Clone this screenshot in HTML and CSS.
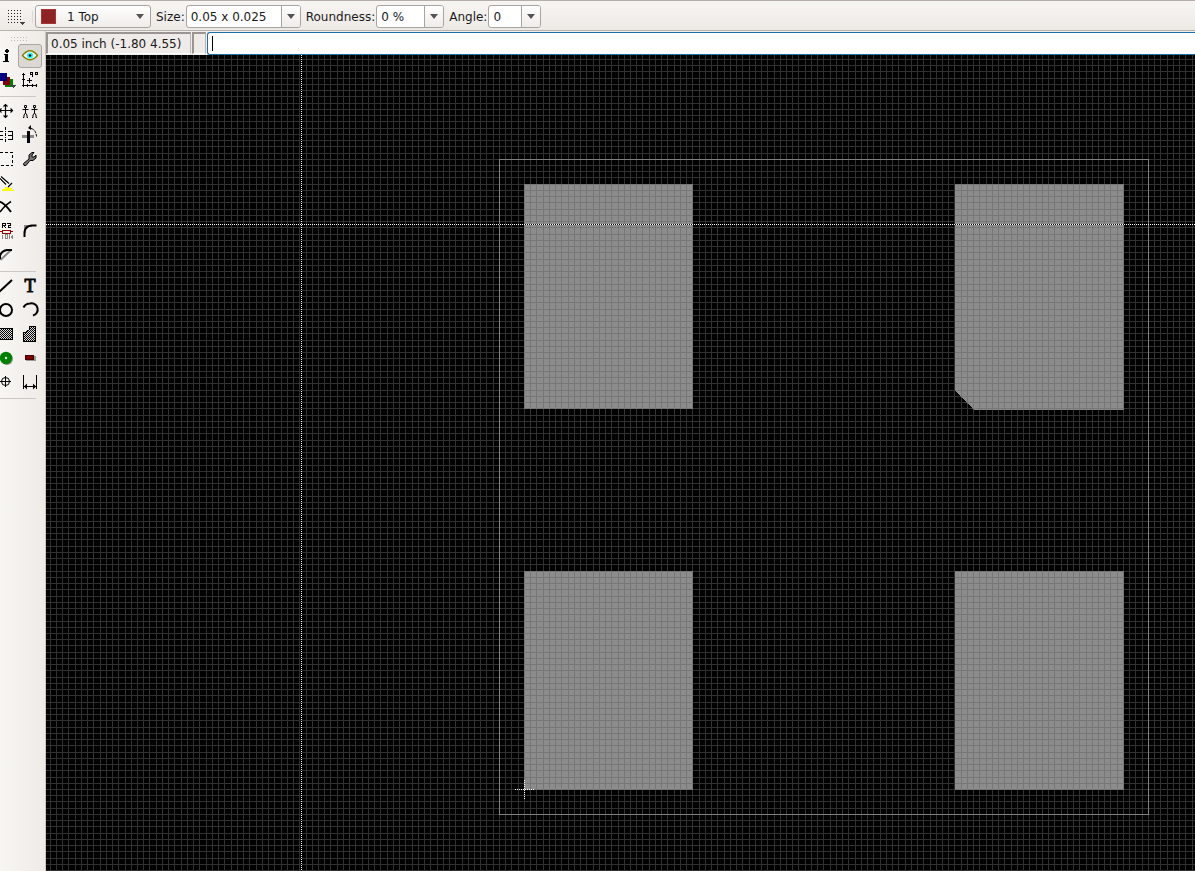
FILE: index.html
```html
<!DOCTYPE html>
<html lang="en">
<head>
<meta charset="utf-8">
<title>Footprint editor</title>
<link rel="stylesheet" href="styles.css">
</head>
<body>
<header class="options">
  <button class="grid-btn" aria-label="Grid"><svg width="20" height="20" shape-rendering="crispEdges"><path d="M1 1.5H15M1 4.5H15M1 7.5H15M1 10.5H15M1 13.5H12" stroke="#222" stroke-dasharray="1 2"/><path d="M12 13h6l-3 3z" fill="#444"/></svg></button>
  <span class="sep"></span>
  <button class="combo layer"><span class="swatch"></span><span class="value">1 Top</span><span class="arrow"></span></button>
  <label for="size">Size:</label>
  <div class="combo size"><input id="size" value="0.05 x 0.025"><button class="drop" aria-label="Size list"><span class="arrow"></span></button></div>
  <label for="round">Roundness:</label>
  <div class="combo round"><input id="round" value="0 %"><button class="drop" aria-label="Roundness list"><span class="arrow"></span></button></div>
  <label for="angle">Angle:</label>
  <div class="combo angle"><input id="angle" value="0"><button class="drop" aria-label="Angle list"><span class="arrow"></span></button></div>
</header>
<div class="work">
  <nav class="tools">
    <div class="handle"></div>
    <div class="group first">
      <button aria-label="Info"><svg viewBox="0 0 24 24" shape-rendering="crispEdges"><path d="M11 6h1V5h2v1h1v2h-1v1h-2V8h-1zM10 10h4v7h1v1h-6v-1h2v-6h-1z" fill="#000"/></svg></button>
      <button class="on" aria-label="Show"><svg viewBox="0 0 24 24"><path d="M4.500 11.500Q12 2 19.500 11.500Q12 20 4.500 11.500z" fill="#fff" stroke="#808000" stroke-width="1.300"/><circle cx="12" cy="11.500" r="3" fill="#0ff"/><circle cx="12" cy="11.500" r="1.300"/></svg></button>
      <button aria-label="Layers"><svg viewBox="0 0 24 24" shape-rendering="crispEdges"><path d="M14 11h5v8h-8v-4z" fill="#008000"/><path d="M9 9h7v8H9z" fill="#800000"/><path d="M5 5h8v8H5z" fill="#000080"/><path d="M16 17h6l-3 3z" fill="#444"/></svg></button>
      <button aria-label="Mark"><svg viewBox="0 0 24 24" fill="none" stroke="#000" shape-rendering="crispEdges"><path d="M5.500 5v14M4 17.500h15M4 6.500h3M4 11.500h3M9.500 16v3M14.500 16v3M18.500 16v3M9 12.500h5M11.500 10v5M12 4.500h2v2h-2zM14.500 4v5M17.500 4.500h2v2h-2z"/></svg></button>
    </div>
    <div class="group edit">
      <button aria-label="Move"><svg viewBox="0 0 24 24" fill="none" stroke="#000" stroke-width="1.200"><path d="M11.500 5v14M5 11.500h14M9.500 7.500l2-2 2 2M9.500 16.500l2 2 2-2M7.500 9.500l-2 2 2 2M16.500 9.500l2 2-2 2"/></svg></button>
      <button aria-label="Copy"><svg viewBox="0 0 24 24" fill="none" stroke="#000"><path d="M6.500 6.500h2v2h-2zM15.500 6.500h2v2h-2zM7.500 9v5M4.500 10.500h6M5 18.500h1V16l1.500-2L9 16v2.500h1M16.500 9v5M13.500 10.500h6M14 18.500h1V16l1.500-2 1.500 2v2.500h1"/></svg></button>
      <button aria-label="Mirror"><svg viewBox="0 0 24 24" fill="none" stroke="#000" shape-rendering="crispEdges"><path d="M9 8.500H4M9 12.500H6M9 16.500H4M14 8.500h4v8h-4M14 12.500h4"/><path d="M11.500 4v16" stroke-dasharray="3 1 1 1"/></svg></button>
      <button aria-label="Rotate"><svg viewBox="0 0 24 24"><path d="M4 12h12v3H4z" fill="#888"/><path d="M9 8h3v12H9z"/><path d="M13 5.500q5 1 5.500 8" fill="none" stroke="#000" stroke-dasharray="3 1"/><path d="M10 5l3-3v5z"/></svg></button>
      <button aria-label="Group"><svg viewBox="0 0 24 24" shape-rendering="crispEdges"><path d="M5.500 5.500h13v13h-13z" fill="none" stroke="#000" stroke-dasharray="3 2"/></svg></button>
      <button aria-label="Change"><svg viewBox="0 0 24 24"><path d="M5.500 16.500L11 12V8l3-2.500h2L14 8v2h2l2-2v3l-3 2.500h-3L8 18.500H6z" fill="#777" stroke="#000"/></svg></button>
      <button aria-label="Paste"><svg viewBox="0 0 24 24"><path d="M11 16h4v1h3v2h2v1H8v-2h3z" fill="#ff0" shape-rendering="crispEdges"/><path d="M6 5l8 7 2 2-2 2-3-4-5-5z" fill="#fff"/><path d="M7 5.500l8 7M6 7.500l6 6M18 12l-4 4" fill="none" stroke="#000" stroke-width="1.200"/></svg></button><span></span>
      <button aria-label="Delete"><svg viewBox="0 0 24 24" fill="none" stroke="#000"><path d="M5 6.500q5 1 12 10.500" stroke-width="2"/><path d="M17 6.500Q11 10 6 17" stroke-width="1.500"/></svg></button><span></span>
      <button aria-label="Value"><svg viewBox="0 0 24 24" fill="none" shape-rendering="crispEdges"><path d="M8.500 9V4.500h3v2h-3M10.500 7v1M11.500 8v1M13 4.500h3v2h-2v2h3" stroke="#000"/><path d="M4 12.500h4v-1h8v1h3M8 12v2h8v-2" stroke="#900"/><path d="M8.500 16v4M11.500 15.500h2v4h-2zM15.500 15v5M18.500 16v1h-1v1h1v2" stroke="#888"/></svg></button>
      <button aria-label="Miter"><svg viewBox="0 0 24 24" fill="none"><path d="M7 14V7h7" stroke="#888" stroke-width="2"/><path d="M6.500 18v-5q1-6 7-6.500h5" stroke="#000" stroke-width="2"/></svg></button>
      <button aria-label="Split"><svg viewBox="0 0 24 24" fill="none"><path d="M6.500 17L17 7" stroke="#888" stroke-width="2"/><path d="M6 16v-3q1-5 7-6h5" stroke="#000" stroke-width="2"/></svg></button><span></span>
    </div>
    <div class="group draw">
      <button aria-label="Wire"><svg viewBox="0 0 24 24"><path d="M5 18L18 6" stroke="#000" stroke-width="2"/></svg></button>
      <button class="text-tool" aria-label="Text">T</button>
      <button aria-label="Circle"><svg viewBox="0 0 24 24"><circle cx="12" cy="12" r="6" fill="none" stroke="#000" stroke-width="2"/></svg></button>
      <button aria-label="Arc"><svg viewBox="0 0 24 24"><path d="M5.500 9.500q2-4 6.500-4a6 6 0 0 1 3 12" fill="none" stroke="#000" stroke-width="2"/></svg></button>
      <button aria-label="Rectangle"><svg viewBox="0 0 24 24" shape-rendering="crispEdges"><defs><pattern id="chk" width="2" height="2" patternUnits="userSpaceOnUse"><path d="M0 0h2v2H0z" fill="#ddd"/><path d="M0 0h1v1H0zM1 1h1v1H1z"/></pattern></defs><path d="M5.500 6.500h13v11h-13z" fill="url(#chk)" stroke="#000"/></svg></button>
      <button aria-label="Polygon"><svg viewBox="0 0 24 24" shape-rendering="crispEdges"><path d="M5.500 19.500v-9h2l4-3v-3h6v15z" fill="url(#chk)" stroke="#000"/></svg></button>
      <button aria-label="Pad"><svg viewBox="0 0 24 24"><circle cx="13" cy="13" r="6" fill="#999"/><circle cx="12" cy="12" r="6.200" fill="#008000"/><circle cx="12" cy="12" r="1.200" fill="#eee"/></svg></button>
      <button aria-label="SMD"><svg viewBox="0 0 24 24" shape-rendering="crispEdges"><path d="M8 10h10v5H8z" fill="#999"/><path d="M7.500 9.500h8v4h-8z" fill="#800000" stroke="#400"/></svg></button>
      <button aria-label="Hole"><svg viewBox="0 0 24 24" fill="none" stroke="#000"><circle cx="11.500" cy="11.500" r="4"/><path d="M11.500 6v11M6 11.500h11"/></svg></button>
      <button aria-label="Dimension"><svg viewBox="0 0 24 24"><path d="M5.500 5v14M18.500 5v14M6 16.500h12" fill="none" stroke="#000" shape-rendering="crispEdges"/><path d="M6 16.500l3-3v6zM18 16.500l-3-3v6z"/></svg></button>
    </div>
  </nav>
  <main class="editor">
    <div class="command">
      <output class="coords">0.05 inch (-1.80 4.55)</output><span class="cell"></span>
      <div class="entry"><span class="caret"></span><input aria-label="Command"></div>
    </div>
    <svg class="board" shape-rendering="crispEdges">
      <clipPath id="pads"><path d="M478 129h169v225H478zM909 129h169v226H928L909 336zM478 516h169v219H478zM909 516h169v219H909z"/></clipPath>
      <path d="M478 129h169v225H478zM909 129h169v226H928L909 336zM478 516h169v219H478zM909 516h169v219H909z" fill="#8c8c8c"/>
      <path id="grid" fill="none" stroke="#808080" stroke-opacity=".38"/>
      <path id="padgrid" fill="none" stroke="#777" clip-path="url(#pads)"/>
      <path d="M453.500 104.500h649v655h-649z" fill="none" stroke="#808080"/>
      <path d="M0 169.500H4000M255.500 0V4000" stroke="#000"/>
      <path class="dots" d="M0 169.500H4000M255.500 0V4000M469 734.500h20M478.500 725v20"/>
    </svg>
  </main>
</div>
<script src="grid.js"></script>
</body>
</html>
```
FILE: styles.css
```css
* { box-sizing: border-box; }
body { margin: 0; height: 100vh; display: flex; flex-direction: column; overflow: hidden; background: #f2efec; color: #1a1a1a; font: 12px/16px "DejaVu Sans", sans-serif; }
button { padding: 0; border: 0; background: none; font: inherit; color: inherit; }
input { min-width: 0; border: 0; outline: 0; background: none; font: inherit; color: inherit; }
svg { display: block; }
.options { flex: none; display: flex; align-items: center; height: 31px; padding: 2px 0 0 7px; border-top: 1px solid #b5aeaa; border-bottom: 1px solid #b9b3b0; background: linear-gradient(#f7f5f2, #edeae6); }
.grid-btn { width: 20px; height: 20px; margin-top: 4px; }
.sep { width: 1px; height: 12px; margin: 0 3px 0 5px; background: #ddd8d4; }
.combo { display: flex; align-items: center; height: 23px; border: 1px solid #aaa4a0; border-radius: 3px; background: #fff; }
.options label { margin: 0 1px 0 5px; }
.layer { width: 116px; margin-left: -1px; padding: 0 6px 0 5px; background: linear-gradient(#fff, #efece9); }
.swatch { width: 15px; height: 15px; background: #8e2323; border: 1px solid #a33; }
.value { flex: 1; margin-left: 11px; text-align: left; }
.arrow { width: 0; height: 0; border: 4px solid transparent; border-top: 5px solid #555; border-bottom: 0; }
.combo input { flex: 1; height: 100%; padding: 0 4px; }
.drop { width: 19px; height: 100%; display: flex; align-items: center; justify-content: center; border-left: 1px solid #aaa4a0; border-radius: 0 2px 2px 0; background: linear-gradient(#fff, #efece9); }
.size { width: 115px; }
.round { width: 68px; }
.angle { width: 53px; }
.work { flex: 1; min-height: 0; display: flex; }
.tools { flex: none; width: 46px; overflow: hidden; border-right: 1px solid #c9c4c1; background: linear-gradient(90deg, #f8f6f3, #eeebe7); }
.handle { width: 18px; height: 5px; margin: 5px 0 3px 10px; background: radial-gradient(circle, #c0bbb7 1px, transparent 1px) 0 0 / 3px 3px; }
.group { display: grid; grid-template-columns: 24px 24px; grid-auto-rows: 24px; width: 36px; border-bottom: 1px solid #ccc7c4; }
.group > * { width: 24px; height: 24px; margin-left: -6px; }
.group svg { width: 24px; height: 24px; }
.tools .on { border: 1px solid #aaa5a1; border-radius: 3px; background: #dcd9d5; }
.on svg { margin: -1px; }
.first { padding-bottom: 4px; }
.edit { padding: 2px 0 4px; }
.draw { padding: 2px 0 4px; }
.tools .text-tool { font: 18px/24px "Liberation Serif", serif; -webkit-text-stroke: 1px #000; }
.editor { flex: 1; min-width: 0; display: flex; flex-direction: column; }
.command { flex: none; display: flex; height: 24px; padding-top: 1px; background: #f0edea; }
.coords, .cell { height: 22px; padding: 2px 3px 0; border: 2px solid #9a9592; border-right: 1px solid #bbb6b2; border-bottom: 1px solid #fff; background: #eeebe8; white-space: nowrap; }
.coords { width: 145px; }
.cell { width: 14px; margin: 0 1px; }
.entry { flex: 1; display: flex; align-items: center; height: 23px; border: 1px solid #1d6fa5; border-right: 0; border-radius: 3px 0 0 3px; background: #fff; }
.entry input { flex: 1; height: 100%; }
.caret { width: 1px; height: 15px; margin-left: 4px; background: #000; }
.board { flex: 1; width: 100%; min-height: 0; background: #000; }
.dots { fill: none; stroke: #fff; stroke-dasharray: 1 1; }
```
FILE: grid.js
```js
const pitch = 6.24;
let d = "";
for (let i = -77; i < 500; i++) {
  d += `M${Math.floor(478.4 + i * pitch) + 0.5} 0V4000`;
}
for (let i = -118; i < 500; i++) {
  d += `M0 ${Math.floor(734.5 + i * pitch) + 0.5}H4000`;
}
document.getElementById("grid").setAttribute("d", d);
document.getElementById("padgrid").setAttribute("d", d);
```
